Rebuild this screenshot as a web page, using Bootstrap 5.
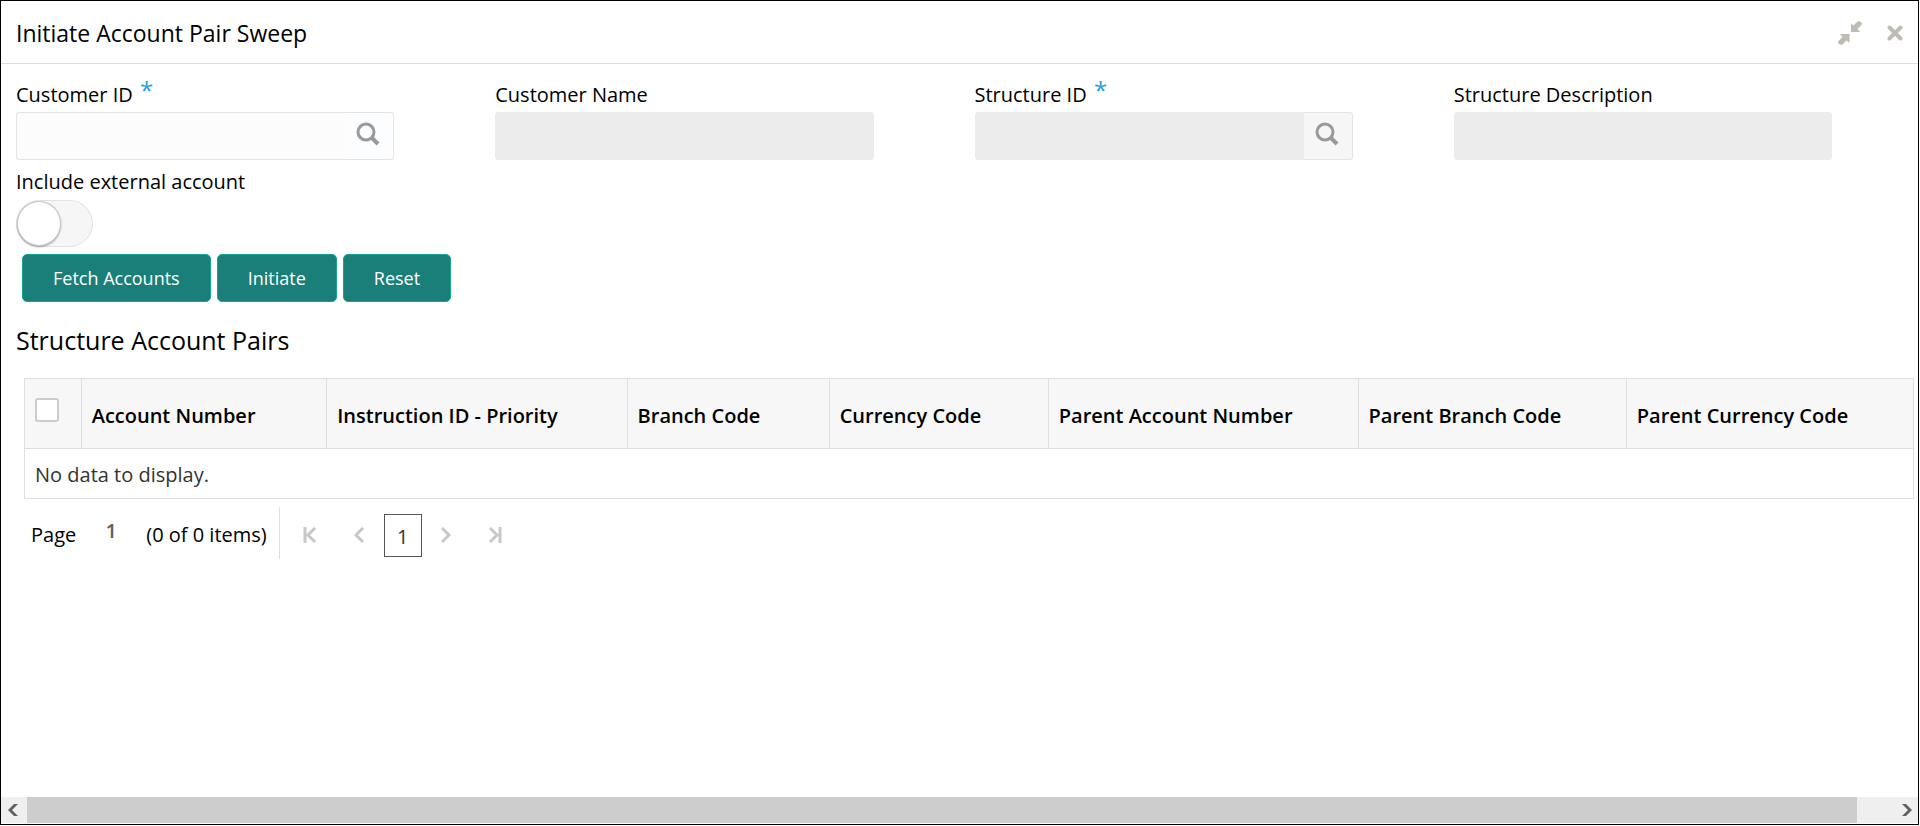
<!DOCTYPE html>
<html lang="en">
<head>
<meta charset="utf-8">
<meta name="viewport" content="width=device-width, initial-scale=1">
<title>Initiate Account Pair Sweep</title>
<link href="https://cdn.jsdelivr.net/npm/bootstrap@5.3.0/dist/css/bootstrap.min.css" rel="stylesheet">
<style>
  body { font-family: "Open Sans", "Noto Sans", sans-serif; font-size: 20px; line-height: 28px; color: #000; background: #fff; padding: 0 1px 1px 0; }
  .panel { border: 1px solid #000; min-height: calc(100vh - 1px); }
  .panel-head { height: 63px; padding: 2px 15px 0; border-bottom: 1px solid #dcdcdc; }
  .panel-title { font-size: 23px; line-height: 30px; }
  .head-btn { border: 0; background: none; padding: 0; line-height: 0; }
  .head-tools { gap: 24px; }
  .panel-title, .field-label, .section-title, .pairs, .pager { color: #000; }

  .form-area { padding: 17px 0 0; }
  .field-col { padding: 0 86px 0 15px; }
  .field-label { display: block; height: 31px; font-size: 20px; }
  .required { color: #1ba1e2; font-size: 24px; line-height: 0; margin-left: 2px; vertical-align: 3px; }
  .field-box, .find-btn { height: 48px; border: 1px solid #e4e4e4; border-radius: 3px; background: #fcfcfc; }
  .field-box:disabled { background: #ececec; border-color: #ececec; }
  .field-box.open-end { border-right: 0; }
  .find-btn { width: 50px; padding: 0 2px 4px 0; line-height: 0; background: #f6f6f6; }
  .find-btn.plain { background: #fcfdfe; border-left: 0; }

  .toggle-row { padding: 8px 15px 0; }
  .toggle-row .field-label { height: 32px; }
  .toggle-track.form-check-input { appearance: none; width: 77px; height: 47px; margin: 0; float: none; display: block; border: 1px solid #e2e2e2; border-radius: 24px; background: #f6f6f6; }
  .toggle-track::before { content: ""; display: block; width: 44px; height: 45px; border-radius: 50%; background: #fff; border: 1px solid #c8c8c8; box-shadow: 0 1px 2px rgba(0,0,0,.35); }

  .actions { padding: 7px 21px 0; gap: 6px; }
  .btn-teal { --bs-btn-color: #fff; --bs-btn-bg: #1b7f79; --bs-btn-border-color: #14a596; --bs-btn-hover-color: #fff; --bs-btn-hover-bg: #166a65; --bs-btn-hover-border-color: #14a596; height: 48px; padding: 0 30px; border-radius: 5px; font-size: 18px; }

  .section-title { font-size: 25px; line-height: 36px; padding: 20px 15px 0; }
  .pairs-wrap { padding: 20px 4px 0 23px; }
  .pairs { table-layout: fixed; font-size: 20px; border-color: #dfdfdf; --bs-table-color: #000; --bs-table-bg: #fff; }
  .pairs > thead > tr > th { height: 70px; padding: 4px 10px 0; font-weight: 600; background: #f7f7f7; vertical-align: middle; white-space: nowrap; }
  .pairs > thead > tr > th.pick { padding: 0 10px 8px; }
  .pairs > tbody > tr > td { height: 50px; padding: 2px 10px 0; color: #333; vertical-align: middle; }
  .c-pick { width: 3%; } .c-acc { width: 13%; } .c-ins { width: 15.9%; } .c-br { width: 10.7%; }
  .c-cur { width: 11.6%; } .c-pacc { width: 16.4%; } .c-pbr { width: 14.2%; } .c-pcur { width: 15.2%; }
  .pick-all.form-check-input { width: 24px; height: 24px; margin: 0; display: block; border: 2px solid #ccc; border-radius: 3px; }

  .pager { padding: 8px 5px 0 30px; }
  .pager label, .page-sum, .page-steps { padding-top: 4px; }
  .page-now { width: 70px; height: 36px; border: 0; padding: 0 0 6px; text-align: center; color: #5f5f5f; font-weight: 600; background: none; }
  .page-sum { height: 52px; padding-right: 12px; border-right: 1px solid #dfdfdf; }
  .nav-btn { border: 0; background: none; padding: 0; width: 49px; height: 43px; line-height: 0; }
  .page-cur { width: 38px; height: 43px; border: 1px solid #555; color: #333; text-decoration: none; line-height: 43px; text-align: center; }
  .page-steps { padding-left: 6px; }

  .hbar { height: 26px; background: #efefef; margin-bottom: 1px; }
  .hbar-btn { width: 26px; border: 0; padding: 0; background: none; line-height: 0; }
  .hbar-btn.to-left { padding-right: 2px; }
  .hbar-btn.to-right { padding-left: 4px; }
  .hbar-thumb { background: #cdcdcd; }
</style>
</head>
<body>
<div class="panel d-flex flex-column">
  <header class="panel-head d-flex align-items-center justify-content-between">
    <h1 class="panel-title fw-normal m-0">Initiate Account Pair Sweep</h1>
    <div class="head-tools d-flex align-items-center">
      <button class="head-btn" type="button" aria-label="Collapse">
        <svg width="26" height="26" viewBox="0 0 26 26" fill="#bfbcb4"><path d="M14 3.500L16.500 5.500L20.500 1.500Q22.500 .8 24 2T24.500 5L20.500 9L23 12H14Z"/><path d="M3 14H12.500V23L9.500 20.500L5.500 24.500Q3.500 25.200 2 24T1.500 21L5.500 17Z"/></svg>
      </button>
      <button class="head-btn" type="button" aria-label="Close">
        <svg width="16" height="16" viewBox="0 0 16 16" stroke="#bfbcb4" stroke-width="4" stroke-linecap="round"><path d="M2.500 2.500L13.500 13.500M13.500 2.500L2.500 13.500"/></svg>
      </button>
    </div>
  </header>

  <main class="flex-grow-1">
    <form>
      <div class="form-area row g-0">
        <div class="col-3 field-col">
          <label class="field-label" for="custId">Customer ID <span class="required">*</span></label>
          <div class="input-group flex-nowrap">
            <input id="custId" class="form-control field-box open-end" type="text">
            <button class="find-btn plain" type="button" aria-label="Find customer">
              <svg width="24" height="24" viewBox="0 0 24 24" fill="none" stroke="#999"><circle cx="10" cy="10" r="8" stroke-width="3"/><path d="M16 16L22 22" stroke-width="4"/></svg>
            </button>
          </div>
        </div>
        <div class="col-3 field-col">
          <label class="field-label" for="custName">Customer Name</label>
          <input id="custName" class="form-control field-box" type="text" disabled>
        </div>
        <div class="col-3 field-col">
          <label class="field-label" for="strId">Structure ID <span class="required">*</span></label>
          <div class="input-group flex-nowrap">
            <input id="strId" class="form-control field-box" type="text" disabled>
            <button class="find-btn" type="button" aria-label="Find structure">
              <svg width="24" height="24" viewBox="0 0 24 24" fill="none" stroke="#999"><circle cx="10" cy="10" r="8" stroke-width="3"/><path d="M16 16L22 22" stroke-width="4"/></svg>
            </button>
          </div>
        </div>
        <div class="col-3 field-col">
          <label class="field-label" for="strDesc">Structure Description</label>
          <input id="strDesc" class="form-control field-box" type="text" disabled>
        </div>
      </div>
      <div class="toggle-row">
        <label class="field-label" for="ext">Include external account</label>
        <input id="ext" class="form-check-input toggle-track" type="checkbox" role="switch">
      </div>
      <div class="actions d-flex">
        <button class="btn btn-teal" type="button">Fetch Accounts</button>
        <button class="btn btn-teal" type="button">Initiate</button>
        <button class="btn btn-teal" type="button">Reset</button>
      </div>
    </form>

    <h2 class="section-title fw-normal m-0">Structure Account Pairs</h2>
    <div class="pairs-wrap">
      <table class="table table-bordered pairs m-0">
        <colgroup><col class="c-pick"><col class="c-acc"><col class="c-ins"><col class="c-br"><col class="c-cur"><col class="c-pacc"><col class="c-pbr"><col class="c-pcur"></colgroup>
        <thead>
          <tr>
            <th class="pick"><input class="form-check-input pick-all" type="checkbox" aria-label="Select all"></th>
            <th>Account Number</th>
            <th>Instruction ID - Priority</th>
            <th>Branch Code</th>
            <th>Currency Code</th>
            <th>Parent Account Number</th>
            <th>Parent Branch Code</th>
            <th>Parent Currency Code</th>
          </tr>
        </thead>
        <tbody><tr><td colspan="8">No data to display.</td></tr></tbody>
      </table>
    </div>
    <nav class="pager d-flex align-items-center" aria-label="Pages">
      <label for="pageNo">Page</label>
      <input id="pageNo" class="page-now" type="text" value="1">
      <span class="page-sum d-flex align-items-center">(0 of 0 items)</span>
      <div class="page-steps d-flex align-items-center">
        <button class="nav-btn" type="button" aria-label="First page"><svg width="14" height="16" viewBox="0 0 14 16" fill="none" stroke="#c8c8c8" stroke-width="3"><path d="M2 0V16M12 1L5 8L12 15"/></svg></button>
        <button class="nav-btn" type="button" aria-label="Previous page"><svg width="10" height="16" viewBox="0 0 10 16" fill="none" stroke="#c8c8c8" stroke-width="3"><path d="M9 1L2 8L9 15"/></svg></button>
        <a class="page-cur" href="#">1</a>
        <button class="nav-btn" type="button" aria-label="Next page"><svg width="10" height="16" viewBox="0 0 10 16" fill="none" stroke="#c8c8c8" stroke-width="3"><path d="M1 1L8 8L1 15"/></svg></button>
        <button class="nav-btn" type="button" aria-label="Last page"><svg width="14" height="16" viewBox="0 0 14 16" fill="none" stroke="#c8c8c8" stroke-width="3"><path d="M12 0V16M2 1L9 8L2 15"/></svg></button>
      </div>
    </nav>
  </main>

  <div class="hbar d-flex">
    <button class="hbar-btn to-left" type="button" aria-label="Scroll left"><svg width="12" height="14" viewBox="0 0 12 14" fill="#606060"><path d="M7 1H11L5 7L11 13H7L1 7Z"/></svg></button>
    <div class="flex-grow-1 d-flex"><div class="hbar-thumb" style="width: 98.1%"></div></div>
    <button class="hbar-btn to-right" type="button" aria-label="Scroll right"><svg width="12" height="14" viewBox="0 0 12 14" fill="#606060"><path d="M5 1H1L7 7L1 13H5L11 7Z"/></svg></button>
  </div>
</div>
<script src="https://cdn.jsdelivr.net/npm/bootstrap@5.3.0/dist/js/bootstrap.bundle.min.js"></script>
</body>
</html>
